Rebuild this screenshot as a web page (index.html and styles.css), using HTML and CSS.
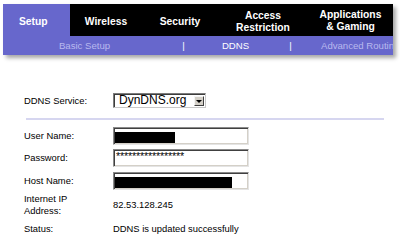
FILE: index.html
```html
<!DOCTYPE html>
<html>
<head>
<meta charset="utf-8">
<link rel="stylesheet" href="styles.css">
</head>
<body>
<div class="header">
  <div class="tabs">
    <div class="tab tab-setup">Setup</div>
    <div class="bar">
      <div class="tab tab-wireless">Wireless</div>
      <div class="tab tab-security">Security</div>
      <div class="tab tab-access">Access<br>Restriction</div>
      <div class="tab tab-apps">Applications<br>&amp; Gaming</div>
    </div>
  </div>
  <div class="subnav">
    <span class="sub sub-basic">Basic Setup</span>
    <span class="pipe pipe-1">|</span>
    <span class="sub sub-ddns">DDNS</span>
    <span class="pipe pipe-2">|</span>
    <span class="sub sub-adv">Advanced Routing</span>
  </div>
</div>

<div class="form">
  <div class="row row-select">
    <div class="label">DDNS Service:</div>
    <div class="select">
      <span class="select-text">DynDNS.org</span>
      <span class="select-btn"><span class="arrow"></span></span>
    </div>
  </div>
  <div class="divider"></div>
  <div class="row row-input first">
    <div class="label">User Name:</div>
    <div class="input"><span class="redact redact-user"></span></div>
  </div>
  <div class="row row-input">
    <div class="label">Password:</div>
    <div class="input"><span class="stars">*****************</span></div>
  </div>
  <div class="row row-input gap5">
    <div class="label">Host Name:</div>
    <div class="input"><span class="redact redact-host"></span></div>
  </div>
  <div class="row row-text row-ip">
    <div class="label">Internet IP<br>Address:</div>
    <div class="value">82.53.128.245</div>
  </div>
  <div class="row row-text row-status">
    <div class="label">Status:</div>
    <div class="value">DDNS is updated successfully</div>
  </div>
</div>
</body>
</html>
```

FILE: styles.css
```css
html, body {
  margin: 0;
  padding: 0;
  background: #ffffff;
}
body {
  font-family: "Liberation Sans", Arial, sans-serif;
  color: #000;
  width: 400px;
  height: 247px;
  overflow: hidden;
}

/* ---------- header ---------- */
.header {
  margin: 4px 0 0 3px;
  width: 390px;
  box-shadow: 3px 3px 4px rgba(0, 0, 0, 0.35);
}
.tabs {
  display: flex;
  height: 32px;
}
.tab {
  display: flex;
  flex: none;
  align-items: center;
  justify-content: center;
  box-sizing: border-box;
  padding-top: 4px;
  height: 32px;
  color: #ffffff;
  font-weight: bold;
  font-size: 10.3px;
  line-height: 12px;
  text-align: center;
}
.tab-setup {
  width: 67px;
  background: #6767cc;
  justify-content: flex-start;
  padding-left: 16px;
}
.bar {
  flex: 1;
  display: flex;
  background: #000000;
}
.tab-wireless { width: 72px; }
.tab-security { width: 76px; }
.tab-access { width: 90px; }
.tab-apps { width: 85px; padding-top: 1px; }

.subnav {
  display: flex;
  align-items: center;
  height: 19px;
  background: #6767cc;
  font-size: 9.6px;
  white-space: nowrap;
  overflow: hidden;
}
.sub, .pipe {
  display: block;
  flex: none;
  text-align: center;
}
.sub-basic {
  width: 81px;
  margin-left: 41px;
  color: #b9b9ee;
}
.pipe {
  width: 5px;
  color: #ffffff;
}
.pipe-1 { margin-left: 56px; }
.sub-ddns {
  width: 61px;
  margin-left: 19px;
  color: #ffffff;
}
.pipe-2 { margin-left: 22px; }
.sub-adv {
  margin-left: 28px;
  color: #b9b9ee;
  text-align: left;
}

/* ---------- form ---------- */
.form {
  margin: 38px 0 0 24px;
  font-size: 9.4px;
}
.row {
  display: flex;
  align-items: center;
}
.label {
  width: 89px;
  flex: none;
  line-height: 12px;
}
.row-select { height: 15px; }
.select {
  box-sizing: border-box;
  width: 93px;
  height: 15px;
  display: flex;
  align-items: center;
  justify-content: space-between;
  border: 1px solid;
  border-color: #7c7c7c #c8c8c8 #c8c8c8 #7c7c7c;
  box-shadow: inset 1px 1px 0 #3c3c3c;
  background: #fff;
}
.select-text {
  font-size: 12px;
  line-height: 13px;
  padding-left: 5px;
}
.select-btn {
  box-sizing: border-box;
  width: 10px;
  height: 10px;
  margin-right: 1px;
  background: #d4d0c8;
  border: 1px solid;
  border-color: #f4f4f4 #404040 #404040 #f4f4f4;
  display: flex;
  align-items: center;
  justify-content: center;
}
.arrow {
  width: 0;
  height: 0;
  border-left: 3px solid transparent;
  border-right: 3px solid transparent;
  border-top: 3px solid #000;
  margin-top: 1px;
}
.divider {
  margin: 10px 0 0 2px;
  width: 358px;
  height: 2px;
  background: #d6d6f0;
}
.row-input {
  height: 18px;
  margin-top: 4px;
}
.row-input.first { margin-top: 7px; }
.row-input.gap5 { margin-top: 5px; }
.input {
  box-sizing: border-box;
  width: 136px;
  height: 18px;
  border: 1px solid;
  border-color: #8a8a8a #e4e4e4 #e4e4e4 #8a8a8a;
  box-shadow: inset 1px 1px 0 #404040, inset -1px -1px 0 #d4d0c8;
  background: #fff;
  display: flex;
  padding: 1px;
}
.redact {
  display: block;
  background: #000;
  height: 11px;
  margin-top: 3px;
}
.redact-user { width: 60px; }
.redact-host { width: 117px; }
.stars {
  font-size: 10.8px;
  line-height: 11px;
  padding-left: 1px;
  letter-spacing: -0.2px;
}
.row-ip { margin-top: 3px; }
.row-status { margin-top: 6px; }
.value { line-height: 12px; }
```
